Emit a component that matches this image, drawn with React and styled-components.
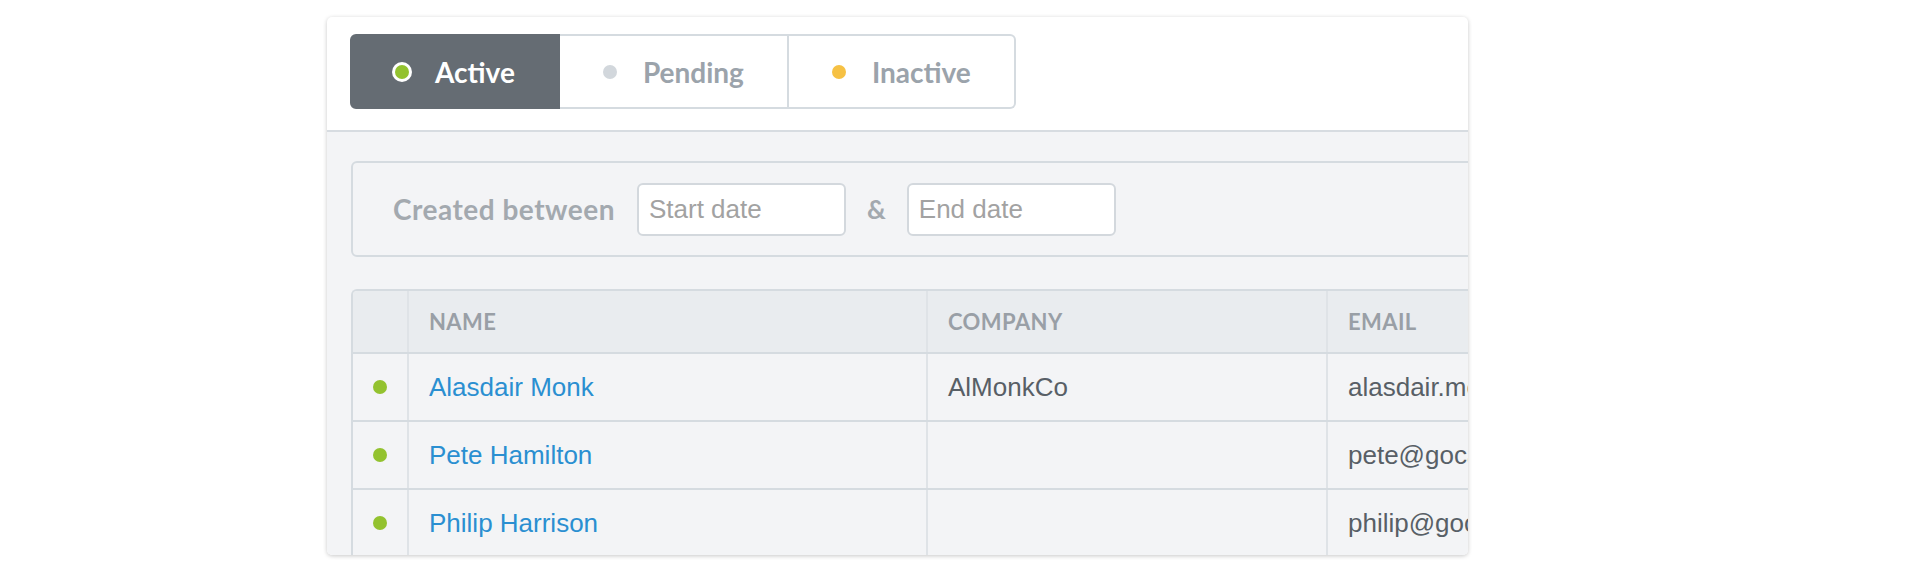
import React from "react";
import styled, { createGlobalStyle } from "styled-components";

const GlobalStyle = createGlobalStyle`
  html, body { margin: 0; padding: 0; background: #ffffff; }
  * { box-sizing: border-box; }
`;

const Page = styled.div`
  width: 1920px;
  height: 582px;
  padding: 17px 0 0 327px;
  overflow: hidden;
`;

const Card = styled.div`
  width: 1141px;
  height: 538px;
  background: #ffffff;
  border-radius: 5px;
  box-shadow: 0 1px 4px rgba(0, 0, 0, 0.22);
  overflow: hidden;
  display: flex;
  flex-direction: column;
`;

const CardHeader = styled.div`
  padding: 17px 23px 21px;
  border-bottom: 2px solid #d7dce1;
  display: flex;
`;

const TabGroup = styled.div`
  display: flex;
`;

const Tab = styled.div`
  height: 75px;
  display: flex;
  align-items: center;
  gap: 26px;
  padding: 0 43px;
  font-family: Lato, "Open Sans", sans-serif;
  font-weight: 700;
  font-size: 28px;
  color: ${(p) => (p.$active ? "#ffffff" : "#9ba3ab")};
  background: ${(p) => (p.$active ? "#656c73" : "#ffffff")};
  border: 2px solid ${(p) => (p.$active ? "#656c73" : "#d5dbe0")};
  border-left-width: ${(p) => (p.$first ? "2px" : "0")};
  border-radius: ${(p) =>
    p.$first ? "6px 0 0 6px" : p.$last ? "0 6px 6px 0" : "0"};
`;

const Dot = styled.span`
  flex: none;
  width: 14px;
  height: 14px;
  border-radius: 50%;
  background: ${(p) => p.$color};
  box-shadow: ${(p) => (p.$ring ? "0 0 0 3px #ffffff" : "none")};
`;

const Body = styled.div`
  flex: 1;
  background: #f3f4f6;
  padding: 29px 0 0 24px;
  display: flex;
  flex-direction: column;
  gap: 32px;
`;

const FilterBox = styled.div`
  width: 1400px;
  height: 96px;
  border: 2px solid #d5dbe0;
  border-radius: 6px;
  display: flex;
  align-items: center;
  gap: 21px;
  padding-left: 40px;
`;

const FilterLabel = styled.span`
  font-family: Lato, "Open Sans", sans-serif;
  font-weight: 700;
  font-size: 28px;
  letter-spacing: 0.5px;
  color: #a3a9af;
  margin-right: 1px;
`;

const DateInput = styled.input`
  width: 209px;
  height: 53px;
  border: 2px solid #d3d8dd;
  border-radius: 6px;
  background: #ffffff;
  padding: 0 10px;
  font-family: "Liberation Sans", Arial, sans-serif;
  font-size: 26px;
  color: #555c63;
  outline: none;
  &::placeholder { color: #a2a2a2; }
`;

const Amp = styled.span`
  font-family: Lato, "Open Sans", sans-serif;
  font-weight: 700;
  font-size: 26px;
  color: #a3a9af;
`;

const Table = styled.div`
  width: 1400px;
  border-left: 2px solid #d5dbe0;
  border-top: 2px solid #d5dbe0;
  border-top-left-radius: 6px;
  overflow: hidden;
`;

const Row = styled.div`
  display: grid;
  grid-template-columns: 54px 519px 400px 1fr;
  height: ${(p) => (p.$head ? 63 : 68)}px;
  background: ${(p) => (p.$head ? "#e9ecef" : "#f3f4f6")};
  border-bottom: 2px solid #d5dbe0;
`;

const Cell = styled.div`
  display: flex;
  align-items: center;
  padding-left: ${(p) => (p.$status ? 0 : 20)}px;
  justify-content: ${(p) => (p.$status ? "center" : "flex-start")};
  border-left: ${(p) => (p.$status ? "none" : "2px solid #dfe3e7")};
  white-space: nowrap;
  overflow: hidden;
`;

const HeadText = styled.span`
  font-family: Lato, "Open Sans", sans-serif;
  font-weight: 700;
  font-size: 22px;
  letter-spacing: 0.4px;
  color: #999fa6;
  text-transform: uppercase;
`;

const NameLink = styled.a`
  font-family: "Liberation Sans", Arial, sans-serif;
  font-size: 26px;
  color: #2a8fd1;
  text-decoration: none;
`;

const CellText = styled.span`
  font-family: "Liberation Sans", Arial, sans-serif;
  font-size: 26px;
  color: #585f66;
`;

const tabs = [
  { label: "Active", color: "#93c22f", active: true },
  { label: "Pending", color: "#d2d7dc" },
  { label: "Inactive", color: "#f6c144" },
];

const customers = [
  { name: "Alasdair Monk", company: "AlMonkCo", email: "alasdair.monk@gocardless.com" },
  { name: "Pete Hamilton", company: "", email: "pete@gocardless.com" },
  { name: "Philip Harrison", company: "", email: "philip@gocardless.com" },
];

export default function App() {
  return (
    <>
      <GlobalStyle />
      <Page>
        <Card>
          <CardHeader>
            <TabGroup>
              {tabs.map((t, i) => (
                <Tab
                  key={t.label}
                  $active={t.active}
                  $first={i === 0}
                  $last={i === tabs.length - 1}
                >
                  <Dot $color={t.color} $ring={t.active} />
                  {t.label}
                </Tab>
              ))}
            </TabGroup>
          </CardHeader>
          <Body>
            <FilterBox>
              <FilterLabel>Created between</FilterLabel>
              <DateInput placeholder="Start date" />
              <Amp>&amp;</Amp>
              <DateInput placeholder="End date" />
            </FilterBox>
            <Table>
              <Row $head>
                <Cell $status />
                <Cell><HeadText>Name</HeadText></Cell>
                <Cell><HeadText>Company</HeadText></Cell>
                <Cell><HeadText>Email</HeadText></Cell>
              </Row>
              {customers.map((c) => (
                <Row key={c.name}>
                  <Cell $status>
                    <Dot $color="#93c22f" />
                  </Cell>
                  <Cell><NameLink href="#">{c.name}</NameLink></Cell>
                  <Cell><CellText>{c.company}</CellText></Cell>
                  <Cell><CellText>{c.email}</CellText></Cell>
                </Row>
              ))}
            </Table>
          </Body>
        </Card>
      </Page>
    </>
  );
}
